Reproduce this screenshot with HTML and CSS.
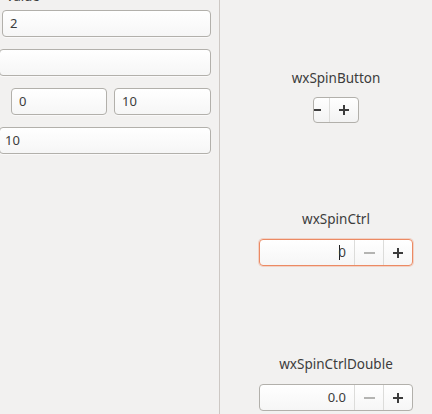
FILE: index.html
```html
<!DOCTYPE html>
<html>
<head>
<meta charset="utf-8">
<link rel="stylesheet" href="styles.css">
</head>
<body>
<div class="page">
  <div class="left">
    <div class="cut-label">Value</div>
    <div class="field f1">2</div>
    <div class="field f2"></div>
    <div class="row">
      <div class="field f3">0</div>
      <div class="field f4">10</div>
    </div>
    <div class="field f5">10</div>
  </div>
  <div class="right">
    <div class="label l1">wxSpinButton</div>
    <div class="spinbtn">
      <div class="sb-minus"><svg width="10" height="10" viewBox="0 0 10 10"><rect x="0" y="4" width="9" height="2" fill="#3c3c3c"/></svg></div>
      <div class="sb-plus"><svg width="10" height="10" viewBox="0 0 10 10"><rect x="0" y="4" width="10" height="2" fill="#3c3c3c"/><rect x="4" y="0" width="2" height="10" fill="#3c3c3c"/></svg></div>
    </div>
    <div class="label l2">wxSpinCtrl</div>
    <div class="spin focused">
      <div class="spin-text"><span class="caret"></span>0</div>
      <div class="spin-btn"><svg width="11" height="10" viewBox="0 0 11 10"><rect x="0" y="4" width="11" height="2" fill="#b4b4b2"/></svg></div>
      <div class="spin-btn"><svg width="10" height="10" viewBox="0 0 10 10"><rect x="0" y="4" width="10" height="2" fill="#3c3c3c"/><rect x="4" y="0" width="2" height="10" fill="#3c3c3c"/></svg></div>
    </div>
    <div class="label l3">wxSpinCtrlDouble</div>
    <div class="spin">
      <div class="spin-text">0.0</div>
      <div class="spin-btn"><svg width="11" height="10" viewBox="0 0 11 10"><rect x="0" y="4" width="11" height="2" fill="#b4b4b2"/></svg></div>
      <div class="spin-btn"><svg width="10" height="10" viewBox="0 0 10 10"><rect x="0" y="4" width="10" height="2" fill="#3c3c3c"/><rect x="4" y="0" width="2" height="10" fill="#3c3c3c"/></svg></div>
    </div>
  </div>
</div>
</body>
</html>
```

FILE: styles.css
```css
html, body {
  margin: 0;
  padding: 0;
  background: #f2f1f0;
  overflow: hidden;
}
body {
  width: 432px;
  height: 414px;
  font-family: "Noto Sans", "DejaVu Sans", sans-serif;
  font-size: 13px;
  color: #3c3c3c;
}
.page {
  display: flex;
  height: 414px;
}
.left {
  flex: none;
  width: 219px;
  height: 414px;
  border-right: 1px solid #cdc8c4;
  display: flex;
  flex-direction: column;
}
.cut-label {
  height: 16px;
  line-height: 16px;
  margin-top: -12px;
  margin-left: 6px;
  margin-bottom: 6px;
}
.field {
  box-sizing: border-box;
  height: 27px;
  border: 1px solid #b2b0ab;
  border-radius: 4px;
  background: linear-gradient(#ffffff, #f6f6f6);
  line-height: 25px;
  padding-left: 7px;
  box-shadow: 0 1px 0 rgba(255,255,255,0.6);
}
.f1 { margin-left: 2px; width: 209px; }
.f2 { margin-left: -1px; width: 212px; margin-top: 12px; }
.row {
  display: flex;
  gap: 7px;
  margin-top: 12px;
  margin-left: 11px;
}
.f3 { width: 96px; }
.f4 { width: 97px; }
.f5 { margin-left: -1px; width: 212px; margin-top: 12px; padding-left: 5px; }
.right {
  flex: none;
  width: 232px;
  display: flex;
  flex-direction: column;
  align-items: center;
  padding-top: 70px;
}
.label {
  line-height: 16px;
  height: 16px;
  font-size: 13.5px;
}
.l2 { margin-top: 88px; }
.l3 { margin-top: 90px; }
.spinbtn {
  margin-top: 11px;
  box-sizing: border-box;
  width: 46px;
  height: 26px;
  border: 1px solid #b2b0ab;
  border-radius: 4px;
  background: linear-gradient(#ffffff, #f3f3f3);
  display: flex;
  overflow: hidden;
}
.sb-minus {
  width: 17px;
  border-right: 1px solid #dcdcda;
  display: flex;
  align-items: center;
  justify-content: flex-start;
  margin-left: -2px;
}
.sb-plus {
  flex: 1;
  display: flex;
  align-items: center;
  justify-content: center;
}
.spin {
  margin-top: 12px;
  box-sizing: border-box;
  width: 154px;
  height: 27px;
  border: 1px solid #b2b0ab;
  border-radius: 4px;
  background: linear-gradient(#ffffff, #f6f6f6);
  display: flex;
}
.spin.focused {
  border-color: #ec8a63;
  box-shadow: 0 0 0 1px rgba(240,119,70,0.25);
}
.spin-text {
  flex: 1;
  text-align: right;
  line-height: 25px;
  padding-right: 8px;
  position: relative;
}
.caret {
  display: inline-block;
  width: 1px;
  height: 15px;
  background: #222;
  vertical-align: -3px;
  margin-right: -1px;
}
.spin-btn {
  width: 28px;
  border-left: 1px solid #dcdcda;
  display: flex;
  align-items: center;
  justify-content: center;
}
```
